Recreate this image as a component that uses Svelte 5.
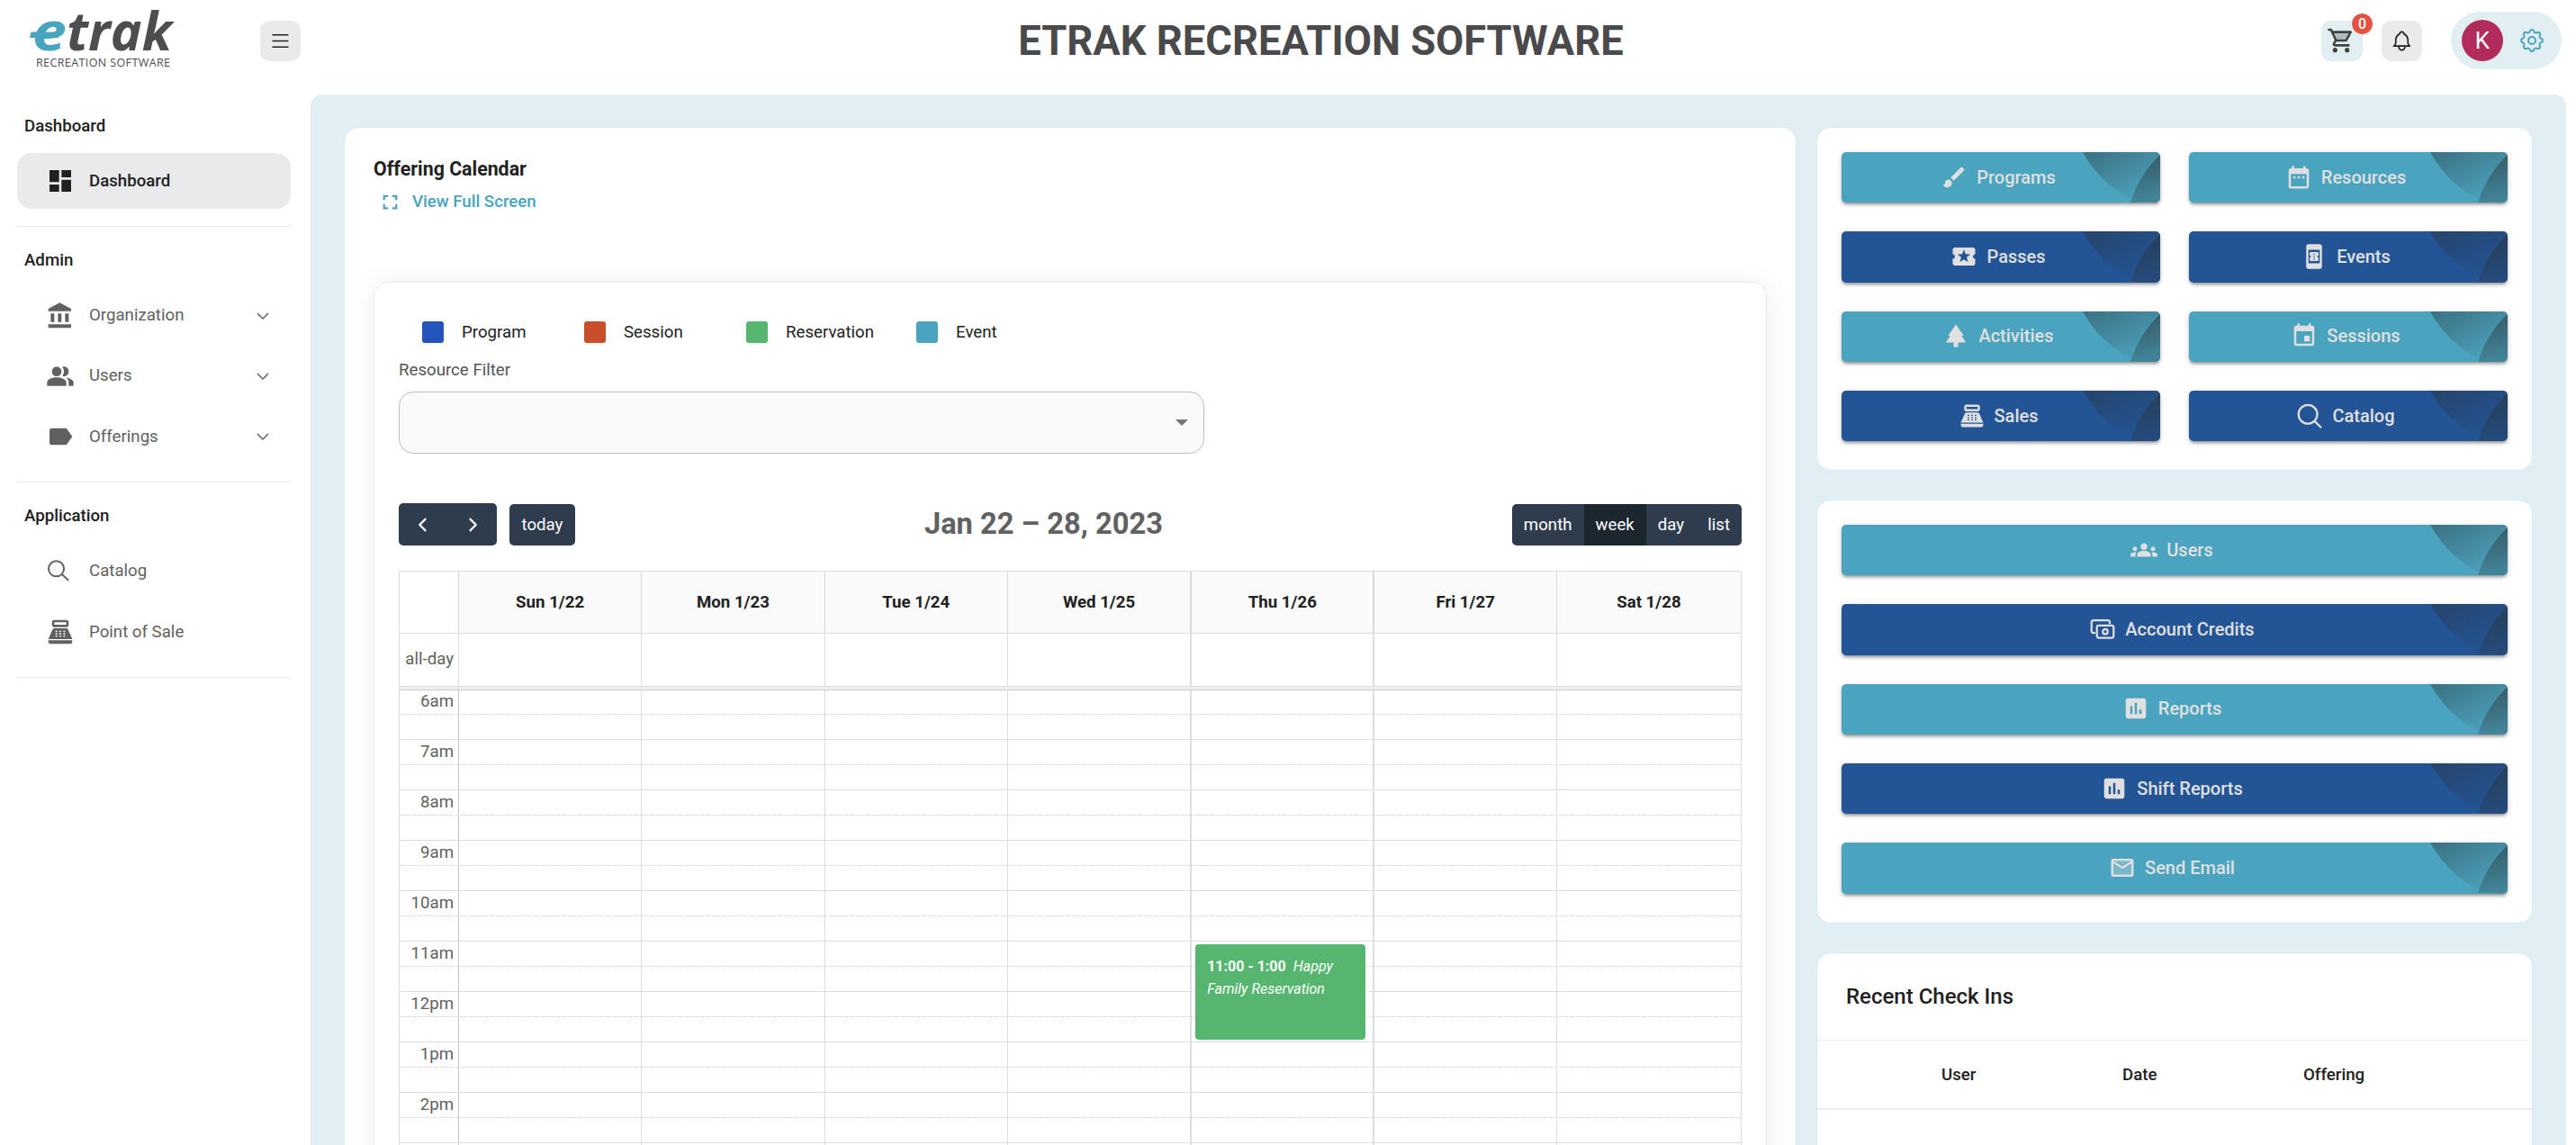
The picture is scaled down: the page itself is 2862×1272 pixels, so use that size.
<script>
  const icons = {
    dashboard: "M3 13h8V3H3v10zm0 8h8v-6H3v6zm10 0h8V11h-8v10zm0-18v6h8V3h-8z",
    bank: "M4 10v7h3v-7H4zm6 0v7h3v-7h-3zM2 22h19v-3H2v3zm14-12v7h3v-7h-3zm-4.5-9L2 6v2h19V6l-9.5-5z",
    people:
      "M16.67 13.13C18.04 14.06 19 15.32 19 17v3h4v-3c0-2.18-3.57-3.47-6.33-3.87zM5 8a4 4 0 1 0 8 0a4 4 0 1 0-8 0zM15 12c2.21 0 4-1.79 4-4s-1.79-4-4-4c-.47 0-.91.1-1.33.24C14.5 5.27 15 6.58 15 8s-.5 2.73-1.33 3.76c.42.14.86.24 1.33.24zM9 13c-2.67 0-8 1.34-8 4v3h16v-3c0-2.66-5.33-4-8-4z",
    label:
      "M17.63 5.84C17.27 5.33 16.67 5 16 5L5 5.01C3.9 5.01 3 5.9 3 7v10c0 1.1.9 1.99 2 1.99L16 19c.67 0 1.27-.33 1.63-.84L22 12l-4.37-6.16z",
    register:
      "M17 2H7c-1.1 0-2 .9-2 2v2c0 1.1.9 2 2 2h10c1.1 0 2-.9 2-2V4c0-1.1-.9-2-2-2zm0 4H7V4h10v2zM20 22H4c-1.1 0-2-.9-2-2v-1h20v1c0 1.1-.9 2-2 2zM18.53 10.19C18.21 9.47 17.49 9 16.7 9H7.3c-.79 0-1.51.47-1.83 1.19L2 18h20l-3.47-7.81zM9.5 16h-1.5v-1h1.5zM9.5 14h-1.5v-1h1.5zM9.5 12h-1.5v-1h1.5zM12.75 16h-1.5v-1h1.5zM12.75 14h-1.5v-1h1.5zM12.75 12h-1.5v-1h1.5zM16 16h-1.5v-1h1.5zM16 14h-1.5v-1h1.5zM16 12h-1.5v-1h1.5z",
    fullscreen:
      "M7 14H5v5h5v-2H7v-3zm-2-4h2V7h3V5H5v5zm12 7h-3v2h5v-5h-2v3zM14 5v2h3v3h2V5h-5z",
    brush:
      "M7 14c-1.66 0-3 1.34-3 3 0 1.31-1.16 2-2 2 .92 1.22 2.49 2 4 2 2.21 0 4-1.79 4-4 0-1.66-1.34-3-3-3zm13.71-9.37l-1.34-1.34a.996.996 0 0 0-1.41 0L9 12.25 11.75 15l8.96-8.96a.996.996 0 0 0 0-1.41z",
    ticket:
      "M20 12c0-1.1.9-2 2-2V6c0-1.1-.9-2-2-2H4c-1.1 0-1.99.9-1.99 2v4c1.1 0 1.99.9 1.99 2s-.89 2-2 2v4c0 1.1.9 2 2 2h16c1.1 0 2-.9 2-2v-4c-1.1 0-2-.9-2-2zm-4.42 4.8L12 14.5l-3.58 2.3 1.08-4.12-3.29-2.69 4.24-.25L12 5.8l1.54 3.95 4.24.25-3.29 2.69 1.09 4.11z",
    tree: "M17 12h2L12 2 5.05 12H7l-3.9 6h6.92v4h3.95v-4H21z",
    dates:
      "M9 11H7v2h2v-2zm4 0h-2v2h2v-2zm4 0h-2v2h2v-2zm2-7h-1V2h-2v2H8V2H6v2H5c-1.11 0-1.99.9-1.99 2L3 20c0 1.1.89 2 2 2h14c1.1 0 2-.9 2-2V6c0-1.1-.9-2-2-2zm0 16H5V9h14v11z",
    booking:
      "M17 1H7c-1.1 0-2 .9-2 2v18c0 1.1.9 2 2 2h10c1.1 0 2-.9 2-2V3c0-1.1-.9-2-2-2zM7 18V6h10v12H7zM16 11V9.14C16 8.51 15.55 8 15 8H9c-.55 0-1 .51-1 1.14V11c.55 0 1 .45 1 1s-.45 1-1 1v1.86c0 .63.45 1.14 1 1.14h6c.55 0 1-.51 1-1.14V13c-.55 0-1-.45-1-1s.45-1 1-1zm-3.5 3.5h-1v-1h1v1zm0-2h-1v-1h1v1zm0-2h-1v-1h1v1z",
    session:
      "M17 12h-5v5h5v-5zM16 1v2H8V1H6v2H5c-1.11 0-1.99.9-1.99 2L3 19c0 1.1.89 2 2 2h14c1.1 0 2-.9 2-2V5c0-1.1-.9-2-2-2h-1V1h-2zm3 18H5V8h14v11z",
    groups:
      "M12 12.75c1.63 0 3.07.39 4.24.9 1.08.48 1.76 1.56 1.76 2.73V18H6v-1.61c0-1.18.68-2.26 1.76-2.73 1.17-.52 2.61-.91 4.24-.91zM4 13c1.1 0 2-.9 2-2s-.9-2-2-2-2 .9-2 2 .9 2 2 2zm1.13 1.1c-.37-.06-.74-.1-1.13-.1-.99 0-1.93.21-2.78.58C.48 14.9 0 15.62 0 16.43V18h4.5v-1.61c0-.83.23-1.61.63-2.29zM20 13c1.1 0 2-.9 2-2s-.9-2-2-2-2 .9-2 2 .9 2 2 2zm4 3.43c0-.81-.48-1.53-1.22-1.85-.85-.37-1.79-.58-2.78-.58-.39 0-.76.04-1.13.1.4.68.63 1.46.63 2.29V18H24v-1.57zM12 6c1.66 0 3 1.34 3 3s-1.34 3-3 3-3-1.34-3-3 1.34-3 3-3z",
    chart:
      "M19 3H5c-1.1 0-2 .9-2 2v14c0 1.1.9 2 2 2h14c1.1 0 2-.9 2-2V5c0-1.1-.9-2-2-2zM9 17H7v-7h2v7zm4 0h-2V7h2v10zm4 0h-2v-4h2v4z",
    mail: "M22 6c0-1.1-.9-2-2-2H4c-1.1 0-2 .9-2 2v12c0 1.1.9 2 2 2h16c1.1 0 2-.9 2-2V6zm-2 0l-8 5-8-5h16zm0 12H4V8l8 5 8-5v10z",
    cart: "M15.55 13c.75 0 1.41-.41 1.75-1.03l3.58-6.49A.996.996 0 0 0 20.01 4H5.21l-.94-2H1v2h2l3.6 7.59-1.35 2.44C4.52 15.37 5.48 17 7 17h12v-2H7l1.1-2h7.45zM6.16 6h12.15l-2.76 5H8.53L6.16 6zM7 18c-1.1 0-1.99.9-1.99 2S5.9 22 7 22s2-.9 2-2-.9-2-2-2zm10 0c-1.1 0-1.99.9-1.99 2s.89 2 1.99 2 2-.9 2-2-.9-2-2-2z",
  };

  // lighter fills for the two-tone icons
  const tones = {
    cart: "M6.16 6h12.15l-2.76 5H8.53z",
    mail: "M4 6h16v12H4z",
  };

  // icons drawn with strokes instead of fills
  const outlines = {
    search: "M3 9.6a6.4 6.4 0 1 0 12.8 0a6.4 6.4 0 1 0-12.8 0zM14.2 14.2L19.6 19.4",
    searchBold: "M2.2 10.6a8.3 8.3 0 1 0 16.6 0a8.3 8.3 0 1 0-16.6 0zM16.2 16.4L22.4 22.6",
    money:
      "M5.6 15.2H4a1.8 1.8 0 0 1-1.8-1.8V5.8A1.8 1.8 0 0 1 4 4h12.6a1.8 1.8 0 0 1 1.8 1.8v1.6M7 10.2a1.6 1.6 0 0 1 1.6-1.6h11.6a1.6 1.6 0 0 1 1.6 1.6v7.8a1.6 1.6 0 0 1-1.6 1.6H8.6a1.6 1.6 0 0 1-1.6-1.6zM12.2 14.1a2.2 2.2 0 1 0 4.4 0a2.2 2.2 0 1 0-4.4 0z",
    menu: "M4 6h16M4 12h16M4 18h16",
    down: "M6 9l6 6l6-6",
    left: "M14.5 6.5L9 12l5.5 5.5",
    right: "M9.5 6.5L15 12l-5.5 5.5",
    bell: "M10 5a2 2 0 1 1 4 0a7 7 0 0 1 4 6v3a4 4 0 0 0 2 3h-16a4 4 0 0 0 2-3v-3a7 7 0 0 1 4-6M9 17v1a3 3 0 0 0 6 0v-1",
    gear: "M10.325 4.317c.426-1.756 2.924-1.756 3.35 0a1.724 1.724 0 0 0 2.573 1.066c1.543-.94 3.31.826 2.37 2.37a1.724 1.724 0 0 0 1.065 2.572c1.756.426 1.756 2.924 0 3.35a1.724 1.724 0 0 0-1.066 2.573c.94 1.543-.826 3.31-2.37 2.37a1.724 1.724 0 0 0-2.572 1.065c-.426 1.756-2.924 1.756-3.35 0a1.724 1.724 0 0 0-2.573-1.066c-1.543.94-3.31-.826-2.37-2.37a1.724 1.724 0 0 0-1.065-2.572c-1.756-.426-1.756-2.924 0-3.35a1.724 1.724 0 0 0 1.066-2.573c-.94-1.543.826-3.31 2.37-2.37c1 .608 2.296.07 2.572-1.065zM9 12a3 3 0 1 0 6 0a3 3 0 1 0-6 0z",
  };

  const menu = [
    { title: "Dashboard", items: [{ label: "Dashboard", icon: "dashboard", active: true }] },
    {
      title: "Admin",
      items: [
        { label: "Organization", icon: "bank", children: true },
        { label: "Users", icon: "people", children: true },
        { label: "Offerings", icon: "label", children: true },
      ],
    },
    {
      title: "Application",
      items: [
        { label: "Catalog", icon: "search" },
        { label: "Point of Sale", icon: "register" },
      ],
    },
  ];

  const legend = ["Program", "Session", "Reservation", "Event"];
  const views = ["month", "week", "day", "list"];
  const days = ["Sun 1/22", "Mon 1/23", "Tue 1/24", "Wed 1/25", "Thu 1/26", "Fri 1/27", "Sat 1/28"];
  const hours = ["6am", "7am", "8am", "9am", "10am", "11am", "12pm", "1pm", "2pm", ""];
  const reservation = { day: "Thu 1/26", hour: "11am", time: "11:00 - 1:00", title: "Happy Family Reservation" };

  const shortcuts = [
    { label: "Programs", icon: "brush", color: "teal" },
    { label: "Resources", icon: "dates", color: "teal" },
    { label: "Passes", icon: "ticket", color: "navy" },
    { label: "Events", icon: "booking", color: "navy" },
    { label: "Activities", icon: "tree", color: "teal" },
    { label: "Sessions", icon: "session", color: "teal" },
    { label: "Sales", icon: "register", color: "navy" },
    { label: "Catalog", icon: "searchBold", color: "navy" },
  ];

  const tools = [
    { label: "Users", icon: "groups", color: "teal" },
    { label: "Account Credits", icon: "money", color: "navy" },
    { label: "Reports", icon: "chart", color: "teal" },
    { label: "Shift Reports", icon: "chart", color: "navy" },
    { label: "Send Email", icon: "mail", color: "teal" },
  ];

  let view = "week";
</script>

{#snippet icon(name)}
  <svg class="icon {name}" viewBox="0 0 24 24" aria-hidden="true">
    {#if outlines[name]}
      <path class="outline" d={outlines[name]} />
    {:else}
      {#if tones[name]}<path opacity="0.3" d={tones[name]} />{/if}
      <path fill-rule="evenodd" d={icons[name]} />
    {/if}
  </svg>
{/snippet}

{#snippet tile(button)}
  <button class="tile {button.color}">
    {@render icon(button.icon)}
    <span>{button.label}</span>
    <svg class="swoosh" viewBox="0 0 86 56" preserveAspectRatio="none" aria-hidden="true">
      <path fill="url(#swoosh-wide)" d="M0 0Q21 38 62 56H86V0z" />
      <path fill="url(#swoosh-narrow)" d="M86 3Q63 24 53 56H86z" />
    </svg>
  </button>
{/snippet}

<svg class="defs" width="0" height="0" aria-hidden="true">
  <linearGradient id="swoosh-wide" x1="0.1" y1="0" x2="0.85" y2="0.9">
    <stop offset="0" stop-color="#2a3035" stop-opacity="0.42" />
    <stop offset="1" stop-color="#2a3035" stop-opacity="0" />
  </linearGradient>
  <linearGradient id="swoosh-narrow" x1="0" y1="0" x2="0" y2="1">
    <stop offset="0" stop-color="#2a3035" stop-opacity="0.5" />
    <stop offset="1" stop-color="#2a3035" stop-opacity="0.26" />
  </linearGradient>
</svg>

<div class="app">
  <header>
    <div class="brand">
      <svg class="logo" width="176" height="66" viewBox="0 0 176 66" role="img" aria-label="etrak">
        <text class="logo-e" x="3" y="45" textLength="38" lengthAdjust="spacingAndGlyphs">e</text>
        <path class="logo-bar" d="M1.5 24.5H32V31H0z" />
        <text class="logo-name" x="41" y="45" textLength="117" lengthAdjust="spacingAndGlyphs">trak</text>
        <text class="logo-sub" x="7" y="63" textLength="149" lengthAdjust="spacing">RECREATION SOFTWARE</text>
      </svg>
      <button class="square grey">{@render icon("menu")}</button>
    </div>
    <h1>ETRAK RECREATION SOFTWARE</h1>
    <div class="actions">
      <button class="square pale">
        {@render icon("cart")}
        <span class="badge">0</span>
      </button>
      <button class="square grey">{@render icon("bell")}</button>
      <div class="profile">
        <span class="avatar">K</span>
        {@render icon("gear")}
      </div>
    </div>
  </header>

  <div class="body">
    <nav>
      {#each menu as group}
        <section>
          <h2>{group.title}</h2>
          <ul>
            {#each group.items as item}
              <li class:active={item.active}>
                {@render icon(item.icon)}
                <span>{item.label}</span>
                {#if item.children}{@render icon("down")}{/if}
              </li>
            {/each}
          </ul>
        </section>
      {/each}
    </nav>

    <main>
      <div class="card offering">
        <h3>Offering Calendar</h3>
        <button class="full-screen">{@render icon("fullscreen")}View Full Screen</button>

        <div class="calendar">
          <div class="legend">
            {#each legend as name}
              <div class="legend-item">
                <i class="swatch {name.toLowerCase()}"></i>{name}
              </div>
            {/each}
          </div>
          <p class="filter-label">Resource Filter</p>
          <div class="select"><i></i></div>

          <div class="toolbar">
            <div class="toolbar-left">
              <div class="group arrows">
                <button>{@render icon("left")}</button>
                <button>{@render icon("right")}</button>
              </div>
              <div class="group"><button>today</button></div>
            </div>
            <h4>Jan 22 – 28, 2023</h4>
            <div class="group views">
              {#each views as name}
                <button class:pressed={view == name} on:click={() => (view = name)}>{name}</button>
              {/each}
            </div>
          </div>

          <div class="grid">
            <div class="row head">
              <div class="axis"></div>
              {#each days as day}
                <div class="cell">{day}</div>
              {/each}
            </div>
            <div class="row all-day">
              <div class="axis">all-day</div>
              {#each days as day}
                <div class="cell"></div>
              {/each}
            </div>
            <div class="divider"></div>
            {#each hours as hour}
              <div class="row hour">
                <div class="axis">{hour}</div>
                {#each days as day}
                  <div class="cell">
                    {#if day == reservation.day && hour == reservation.hour}
                      <div class="slot-event"><b>{reservation.time}</b> <em>{reservation.title}</em></div>
                    {/if}
                  </div>
                {/each}
              </div>
            {/each}
          </div>
        </div>
      </div>

      <aside>
        <div class="card tiles two">
          {#each shortcuts as button}
            {@render tile(button)}
          {/each}
        </div>
        <div class="card tiles">
          {#each tools as button}
            {@render tile(button)}
          {/each}
        </div>
        <div class="card check-ins">
          <h3>Recent Check Ins</h3>
          <div class="columns">
            <span>User</span>
            <span>Date</span>
            <span>Offering</span>
          </div>
        </div>
      </aside>
    </main>
  </div>
</div>

<style>
  :global(body) {
    margin: 0;
    background: #fff;
  }

  .app {
    height: 100vh;
    overflow: hidden;
    display: flex;
    flex-direction: column;
    font-family: Roboto, sans-serif;
    font-size: 18.67px;
    color: #212121;
  }

  .defs {
    position: absolute;
  }

  h1,
  h2,
  h3,
  h4,
  p,
  ul {
    margin: 0;
    padding: 0;
  }

  button {
    border: 0;
    padding: 0;
    background: none;
    font: inherit;
    color: inherit;
  }

  .icon {
    width: 32px;
    height: 32px;
    flex: none;
    fill: currentColor;
  }

  .outline {
    fill: none;
    stroke: currentColor;
    stroke-width: 1.5;
    stroke-linejoin: round;
  }

  /* header */
  header {
    height: 105px;
    flex: none;
    box-sizing: border-box;
    display: flex;
    align-items: flex-start;
    padding: 0 16px 0 33px;
  }

  .brand {
    display: flex;
    padding-top: 11px;
    margin-right: 22px;
  }

  .logo {
    margin-right: 80px;
    overflow: visible;
  }

  .logo-e,
  .logo-name {
    font: italic 700 59px "Open Sans", sans-serif;
    fill: #4d4d4f;
  }

  .logo-e,
  .logo-bar {
    fill: #48a4bf;
  }

  .logo-sub {
    font: 12.5px "Open Sans", sans-serif;
    fill: #4d4d4f;
  }

  .square {
    position: relative;
    width: 45px;
    height: 45px;
    border-radius: 11px;
    display: flex;
    align-items: center;
    justify-content: center;
  }

  .brand .square {
    margin-top: 12px;
  }

  .square .icon {
    width: 27px;
    height: 27px;
  }

  .grey {
    background: #e9eaec;
  }

  .pale {
    width: 46px;
    background: #e2eff2;
    color: #424242;
  }

  .pale .cart {
    width: 32px;
    height: 32px;
    margin-left: -3px;
  }

  .badge {
    position: absolute;
    top: -9px;
    right: -12px;
    width: 23px;
    height: 23px;
    border: 1px solid #fff;
    border-radius: 50%;
    background: #e35141;
    color: #fff;
    font-size: 16px;
    font-weight: 500;
    line-height: 23px;
    text-align: center;
  }

  h1 {
    flex: 1;
    padding-top: 18px;
    font-size: 45.33px;
    font-weight: 700;
    line-height: 56px;
    text-align: center;
    color: #4a4a4c;
  }

  .actions {
    display: flex;
    align-items: center;
    padding-top: 13px;
  }

  .actions .pale {
    margin-right: 21px;
  }

  .profile {
    width: 123px;
    height: 64px;
    box-sizing: border-box;
    margin-left: 32px;
    padding: 0 17px 0 12px;
    border-radius: 32px;
    background: #e2eff2;
    color: #48a4bf;
    display: flex;
    align-items: center;
    justify-content: space-between;
  }

  .avatar {
    width: 46px;
    height: 46px;
    border-radius: 50%;
    background: #b12b5b;
    color: #fff;
    font-size: 26px;
    line-height: 46px;
    text-align: center;
  }

  /* sidebar */
  .body {
    flex: 1;
    min-height: 0;
    display: flex;
  }

  nav {
    width: 345px;
    flex: none;
    box-sizing: border-box;
    padding: 4px 22px 0 19px;
  }

  nav section {
    padding-bottom: 19px;
    margin-bottom: 7px;
    border-bottom: 1px solid #e8e9ea;
  }

  h2 {
    padding: 1px 0 0 8px;
    font-size: 18.67px;
    font-weight: 500;
    line-height: 60.3px;
  }

  section + section h2 {
    padding-top: 0;
    padding-bottom: 1px;
  }

  ul {
    display: flex;
    flex-direction: column;
    gap: 6px;
    list-style: none;
  }

  li {
    height: 61.3px;
    padding: 0 16px 0 32px;
    border-radius: 16px;
    display: flex;
    align-items: center;
    color: #616161;
  }

  li span {
    flex: 1;
    padding: 0 0 1px 16px;
  }

  li.active {
    background: #e9eaec;
    color: #212121;
    font-weight: 500;
  }

  li.active span {
    padding-bottom: 0;
  }

  li .search {
    margin: 1px 1px 0 -1px;
  }

  li .down {
    width: 24px;
    height: 24px;
    margin-right: 3px;
  }

  /* content */
  main {
    flex: 1;
    margin-right: 11px;
    padding: 36px 37px 0 37px;
    border-radius: 13px 13px 0 0;
    background: #e2eff2;
    display: flex;
    gap: 22px;
    align-items: flex-start;
  }

  .card {
    border: 1px solid #d3edf5;
    border-radius: 16px;
    background: #fff;
  }

  .offering {
    width: 1614px;
    box-sizing: border-box;
    padding: 32px 32px 0;
    flex: none;
  }

  h3 {
    font-size: 21.33px;
    font-weight: 500;
    line-height: 27px;
  }

  .offering h3 {
    font-weight: 700;
  }

  .full-screen {
    display: flex;
    align-items: center;
    gap: 11px;
    margin: 10px 0 0 5px;
    color: #48a4bf;
    font-weight: 500;
    line-height: 27px;
  }

  .full-screen .icon {
    width: 27px;
    height: 27px;
  }

  .calendar {
    margin-top: 75px;
    padding: 43px 27px 40px;
    border: 1px solid #dceff2;
    border-radius: 16px;
    box-shadow: 0 2px 30px rgba(0, 0, 0, 0.08);
  }

  .legend {
    display: flex;
    padding-left: 26px;
  }

  .legend-item {
    min-width: 180px;
    box-sizing: border-box;
    padding-right: 47px;
    display: flex;
    align-items: center;
    gap: 20px;
  }

  .swatch {
    width: 24px;
    height: 24px;
    border-radius: 3px;
  }

  .swatch.program {
    background: #2355bb;
  }

  .swatch.session {
    background: #c84f2a;
  }

  .swatch.reservation {
    background: #56b56f;
  }

  .swatch.event {
    background: #4ba4bf;
  }

  .filter-label {
    margin-top: 17px;
    line-height: 26px;
    color: #555;
  }

  .select {
    width: 895px;
    height: 69px;
    box-sizing: border-box;
    margin-top: 11px;
    padding-right: 17px;
    border: 1px solid #bdbdbd;
    border-radius: 16px;
    background: #fafafa;
    display: flex;
    align-items: center;
    justify-content: flex-end;
  }

  .select i {
    border: 7px solid transparent;
    border-top-color: #757575;
    border-bottom: 0;
  }

  .toolbar {
    height: 47px;
    margin: 55px 0 28px;
    display: flex;
    align-items: flex-end;
    justify-content: space-between;
  }

  .toolbar-left {
    display: flex;
    align-items: flex-end;
    gap: 14px;
  }

  .group {
    display: flex;
    height: 46px;
    border-radius: 5px;
    overflow: hidden;
    background: #2f3c4e;
    color: #fff;
  }

  .group button {
    padding: 0 13.5px;
  }

  .views button {
    padding: 0 13px;
  }

  .arrows {
    height: 47px;
  }

  .arrows button {
    width: 54.5px;
    padding: 0;
    display: flex;
    align-items: center;
    justify-content: center;
  }

  .arrows .icon {
    width: 30px;
    height: 30px;
  }

  .arrows .outline {
    stroke-width: 1.8;
  }

  .pressed {
    background: #1b262e;
  }

  h4 {
    font-size: 32.67px;
    font-weight: 700;
    line-height: 47px;
    color: #616161;
  }

  .grid {
    height: 638px;
    overflow: hidden;
    border: 1px solid #ddd;
    border-bottom: 0;
  }

  .row {
    position: relative;
    display: grid;
    grid-template-columns: 65px repeat(6, 203.3px) 1fr;
    box-sizing: border-box;
  }

  .axis {
    padding-right: 5px;
    text-align: right;
    color: #616161;
  }

  .cell {
    position: relative;
    border-left: 1px solid rgba(0, 0, 0, 0.13);
  }

  .cell:nth-child(6),
  .cell:nth-child(7) {
    border-left-width: 2px;
  }

  .head {
    height: 69px;
    line-height: 68px;
    border-bottom: 1px solid #ddd;
    font-weight: 700;
    text-align: center;
  }

  .head .cell {
    background: #fafafa;
  }

  .all-day {
    height: 58px;
    line-height: 57px;
  }

  .divider {
    position: relative;
    z-index: 1;
    height: 5px;
    box-sizing: border-box;
    border-top: 1px solid #ddd;
    border-bottom: 1px solid #ccc;
    background: #efefef;
  }

  .hour {
    height: 56px;
    border-top: 1px solid #ddd;
    line-height: 26px;
  }

  .divider + .hour {
    margin-top: -2px;
  }

  .hour::after {
    content: "";
    position: absolute;
    top: 27px;
    left: 0;
    right: 0;
    border-top: 1px dotted #d0d0d0;
  }

  .hour .cell:nth-child(2) {
    border-left-color: #c4c4c4;
  }

  .slot-event {
    position: absolute;
    z-index: 2;
    top: 3px;
    left: 4px;
    width: 189px;
    height: 106px;
    box-sizing: border-box;
    padding: 12px 13px;
    border-radius: 4px;
    box-shadow: 0 0 0 2px #fff;
    background: #56b56f;
    color: #fff;
    font-size: 16px;
    line-height: 25px;
  }

  .slot-event b {
    margin-right: 4px;
  }

  /* right column */
  aside {
    flex: 1;
    display: flex;
    flex-direction: column;
    gap: 32px;
  }

  .tiles {
    padding: 27px 27px 0;
    display: grid;
  }

  .two {
    grid-template-columns: 1fr 1fr;
    column-gap: 32px;
  }

  .tile {
    position: relative;
    height: 56.3px;
    margin-bottom: 32px;
    padding: 0 6px 1px 0;
    border-radius: 5px;
    display: flex;
    align-items: center;
    justify-content: center;
    gap: 10px;
    color: #e0e0e0;
    font-size: 20px;
    font-weight: 500;
    box-shadow:
      0 4px 2px -3px rgba(0, 0, 0, 0.2),
      0 3px 3px rgba(0, 0, 0, 0.2),
      0 1px 7px rgba(0, 0, 0, 0.14);
  }

  .tile .icon {
    width: 30px;
    height: 30px;
  }

  .tile .outline {
    stroke-width: 1.8;
  }

  .teal {
    background: #4ba4bf;
  }

  .navy {
    background: #235596;
  }

  .swoosh {
    position: absolute;
    top: 0;
    right: 0;
    width: 86px;
    height: 100%;
    border-radius: 0 5px 5px 0;
  }

  .check-ins {
    height: 260px;
  }

  .check-ins h3 {
    padding: 0 32px;
    font-size: 24px;
    line-height: 96px;
    border-bottom: 1px solid #ececec;
  }

  .columns {
    display: grid;
    grid-template-columns: 201px 201px 1fr;
    padding: 1px 0 0 138px;
    border-bottom: 2px solid #ececec;
    font-weight: 500;
    line-height: 74px;
  }
</style>
